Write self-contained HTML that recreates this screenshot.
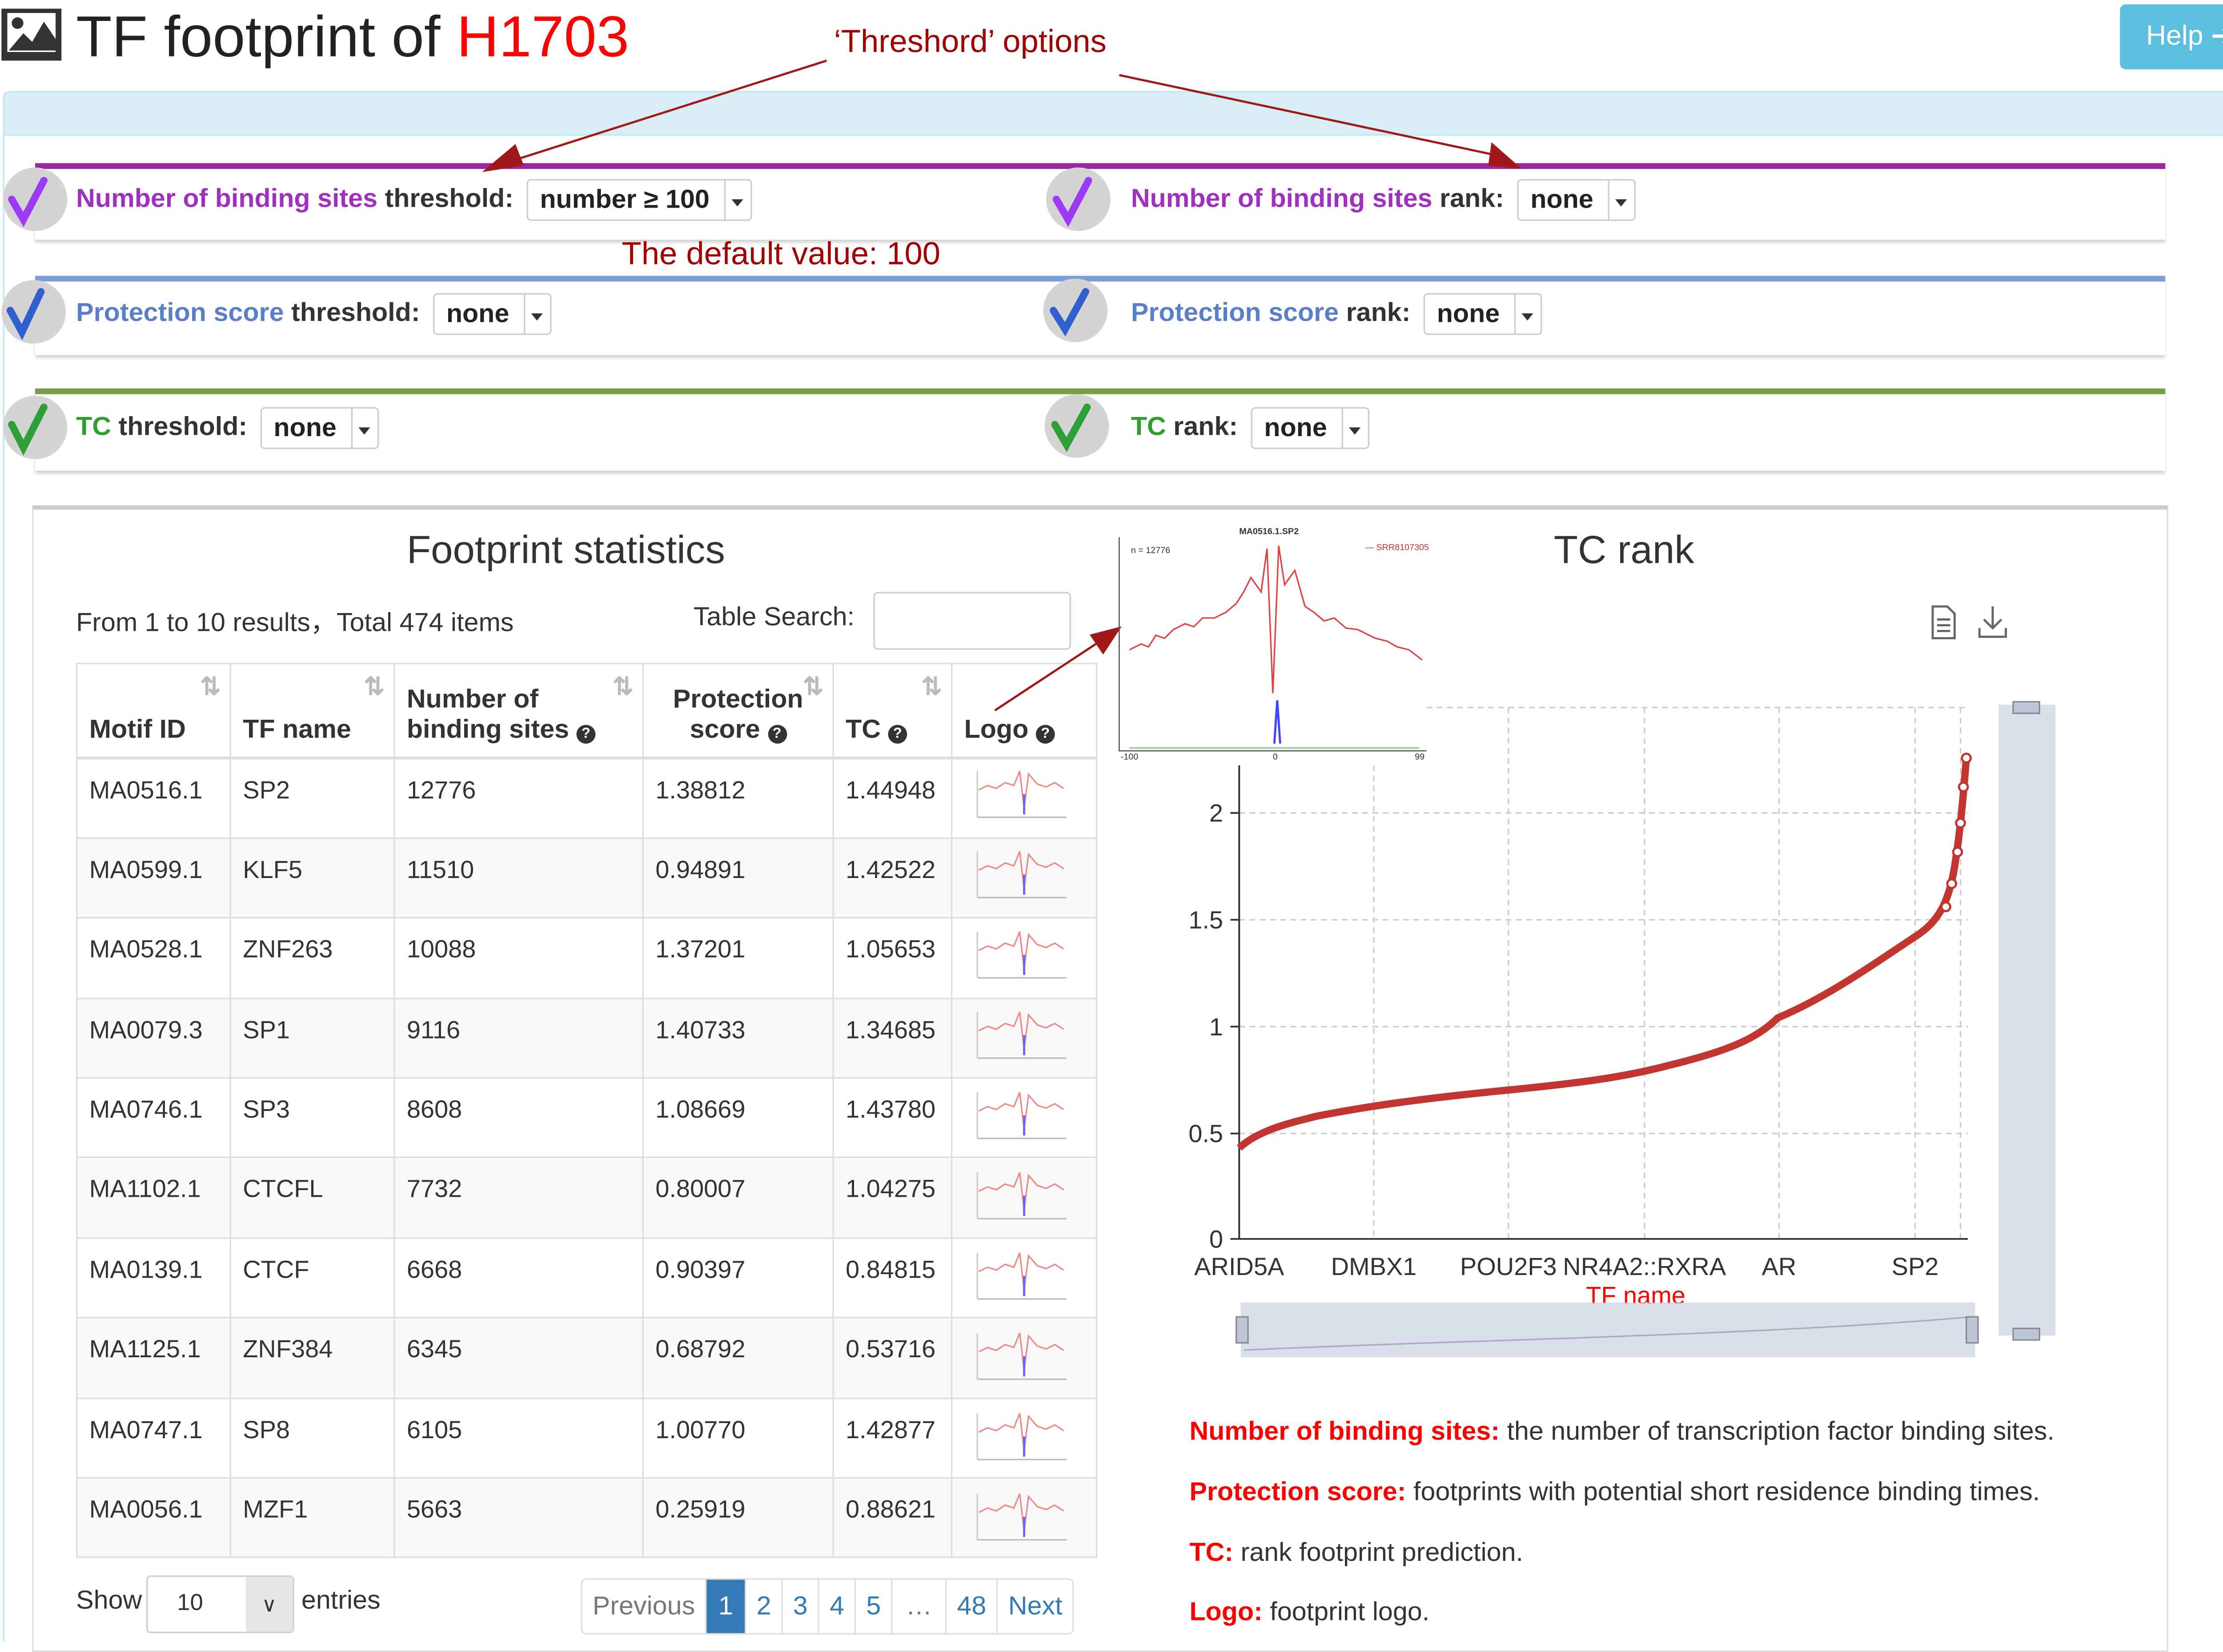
<!DOCTYPE html>
<html><head><meta charset="utf-8">
<style>
html,body{margin:0;padding:0;background:#fff;}
body{width:5094px;height:3693px;overflow:hidden;position:relative;}
#w{position:absolute;left:0;top:0;width:1548px;height:1137px;transform-origin:0 0;transform:scale(3.2907,3.248);font-family:"Liberation Sans",Arial,sans-serif;color:#333;}
.a{position:absolute;white-space:nowrap;}
.box{position:absolute;left:24px;width:1456px;background:#fff;box-shadow:0 2px 2px rgba(0,0,0,.18);}
.circ{position:absolute;width:44px;height:44px;border-radius:50%;background:#d4d4d4;}
.lab{position:absolute;font-size:18px;font-weight:bold;white-space:nowrap;}
.sel{display:inline-block;border:1px solid #ccc;border-radius:3px;padding:3px 28px 3px 8px;position:relative;font-size:18px;font-weight:bold;color:#222;margin-left:4px;vertical-align:middle;background:#fff;}
.sel:after{content:"";position:absolute;right:0;top:0;bottom:0;width:17px;border-left:1px solid #ccc;}
.sel:before{content:"";position:absolute;right:5px;top:13px;border:4px solid transparent;border-top:5px solid #333;border-bottom:none;}
table{border-collapse:collapse;position:absolute;left:52px;top:459px;font-size:17px;}
td,th{border:1px solid #ddd;padding:0 8px;text-align:left;vertical-align:top;}
th{height:56px;vertical-align:bottom;padding-bottom:8px;border-bottom:2px solid #ddd;font-size:18px;position:relative;}
td{height:55.4px;padding-top:12px;box-sizing:border-box;}
tr:nth-child(odd) td{background:#f9f9f9;}
.srt{position:absolute;right:6px;top:6px;color:#bbb;font-size:17px;font-weight:bold;}
.q{display:inline-block;width:13px;height:13px;border-radius:50%;background:#333;color:#fff;font-size:10px;text-align:center;line-height:13px;}
.pg{position:absolute;top:1093px;left:397px;height:37px;border:1px solid #ddd;border-radius:4px;display:flex;font-size:18px;}
.pg span{border-left:1px solid #ddd;padding:0 7px;line-height:37px;color:#337ab7;}
.leg{position:absolute;left:813px;font-size:18px;color:#333;white-space:nowrap;}
.leg b{color:#f00;}
</style></head><body><div id="w">

<svg class="a" style="left:0;top:5px" width="44" height="38" viewBox="0 0 44 38"><rect x="1" y="1" width="41" height="36" fill="#333"/><rect x="5" y="4" width="33" height="27" fill="#fff"/><circle cx="12" cy="11" r="4" fill="#333"/><path d="M6 30 L16 18 L22 24 L30 10 L38 22 L38 30Z" fill="#333"/></svg>
<div class="a" style="left:52px;top:4px;font-size:40px;color:#222;">TF footprint of <span style="color:#f00">H1703</span></div>
<div class="a" style="left:1449px;top:3px;width:96px;height:45px;background:#5bc0de;border-radius:4px;color:#fff;font-size:19px;line-height:45px;text-align:center;">Help ➔</div>
<div class="a" style="left:570px;top:16px;font-size:22px;color:#a00000;">‘Threshord’ options</div>

<div class="a" style="left:2px;top:63px;width:1541px;height:29px;background:#d9edf7;border:1px solid #bce8f1;border-radius:4px 4px 0 0;"></div>
<div class="a" style="left:2px;top:92px;width:1px;height:1045px;background:#bce8f1;"></div>
<div class="a" style="left:1544px;top:92px;width:1px;height:885px;background:#bce8f1;"></div>

<div class="box" style="top:113px;height:49px;border-top:4px solid #9b27a0;"></div>
<div class="box" style="top:191px;height:51px;border-top:4px solid #7b9fd8;"></div>
<div class="box" style="top:269px;height:53px;border-top:4px solid #7a9c4a;"></div>

<div class="circ" style="left:2px;top:116px"></div><div class="circ" style="left:715px;top:116px"></div>
<div class="circ" style="left:1px;top:194px"></div><div class="circ" style="left:713px;top:193px"></div>
<div class="circ" style="left:2px;top:274px"></div><div class="circ" style="left:714px;top:273px"></div>
<svg class="a" style="left:0;top:110px" width="770" height="220">
<g fill="none" stroke-width="5" stroke-linecap="round">
<path d="M8 28 L16 42 L30 15" stroke="#9b3bf5"/><path d="M722 28 L730 42 L744 15" stroke="#9b3bf5"/>
<path d="M7 105 L15 120 L28 92" stroke="#3060d0"/><path d="M720 105 L728 118 L742 92" stroke="#3060d0"/>
<path d="M8 184 L16 200 L30 172" stroke="#2e9e36"/><path d="M721 184 L729 198 L743 172" stroke="#2e9e36"/>
</g></svg>

<div class="lab" style="left:52px;top:124px;"><span style="color:#a030c0">Number of binding sites</span> threshold: <span class="sel">number ≥ 100</span></div>
<div class="lab" style="left:773px;top:124px;"><span style="color:#a030c0">Number of binding sites</span> rank: <span class="sel">none</span></div>
<div class="a" style="left:425px;top:163px;font-size:22px;color:#a00000;">The default value: 100</div>
<div class="lab" style="left:52px;top:203px;"><span style="color:#5b7ec9">Protection score</span> threshold: <span class="sel">none</span></div>
<div class="lab" style="left:773px;top:203px;"><span style="color:#5b7ec9">Protection score</span> rank: <span class="sel">none</span></div>
<div class="lab" style="left:52px;top:282px;"><span style="color:#2e9e2e">TC</span> threshold: <span class="sel">none</span></div>
<div class="lab" style="left:773px;top:282px;"><span style="color:#2e9e2e">TC</span> rank: <span class="sel">none</span></div>

<div class="a" style="left:22px;top:350px;width:1458px;height:790px;border:1px solid #ddd;border-top:3px solid #ccc;"></div>
<div class="a" style="left:278px;top:366px;font-size:27px;">Footprint statistics</div>
<div class="a" style="left:52px;top:417px;font-size:18px;">From 1 to 10 results，Total 474 items</div>
<div class="a" style="left:474px;top:417px;font-size:18px;">Table Search:</div>
<div class="a" style="left:597px;top:410px;width:133px;height:38px;border:1px solid #ccc;border-radius:3px;"></div>

<table>
<tr><th style="width:88px">Motif ID<span class="srt">⇅</span></th><th style="width:95px">TF name<span class="srt">⇅</span></th><th style="width:153px">Number of<br>binding sites <span class="q">?</span><span class="srt">⇅</span></th><th style="width:113px;text-align:center">Protection<br>score <span class="q">?</span><span class="srt">⇅</span></th><th style="width:64px">TC <span class="q">?</span><span class="srt">⇅</span></th><th style="width:82px">Logo <span class="q">?</span></th></tr>
<tr><td>MA0516.1</td><td>SP2</td><td>12776</td><td>1.38812</td><td>1.44948</td><td class="lg"></td></tr>
<tr><td>MA0599.1</td><td>KLF5</td><td>11510</td><td>0.94891</td><td>1.42522</td><td class="lg"></td></tr>
<tr><td>MA0528.1</td><td>ZNF263</td><td>10088</td><td>1.37201</td><td>1.05653</td><td class="lg"></td></tr>
<tr><td>MA0079.3</td><td>SP1</td><td>9116</td><td>1.40733</td><td>1.34685</td><td class="lg"></td></tr>
<tr><td>MA0746.1</td><td>SP3</td><td>8608</td><td>1.08669</td><td>1.43780</td><td class="lg"></td></tr>
<tr><td>MA1102.1</td><td>CTCFL</td><td>7732</td><td>0.80007</td><td>1.04275</td><td class="lg"></td></tr>
<tr><td>MA0139.1</td><td>CTCF</td><td>6668</td><td>0.90397</td><td>0.84815</td><td class="lg"></td></tr>
<tr><td>MA1125.1</td><td>ZNF384</td><td>6345</td><td>0.68792</td><td>0.53716</td><td class="lg"></td></tr>
<tr><td>MA0747.1</td><td>SP8</td><td>6105</td><td>1.00770</td><td>1.42877</td><td class="lg"></td></tr>
<tr><td>MA0056.1</td><td>MZF1</td><td>5663</td><td>0.25919</td><td>0.88621</td><td class="lg"></td></tr>
</table>

<svg class="a" style="left:665px;top:530px" width="70" height="550">
<g id="lg"><path d="M4 17 L10 14 L16 16 L22 12 L28 14 L32 4 L35 30 L38 6 L44 13 L50 15 L56 12 L62 16" fill="none" stroke="#e88" stroke-width="1"/><path d="M35 20 L35 34" stroke="#66f" stroke-width="1.5"/><path d="M3 36 H64" stroke="#bbb"/><path d="M3 4 V36" stroke="#ccc"/></g>
<use href="#lg" y="55.6"/><use href="#lg" y="111.2"/><use href="#lg" y="166.8"/><use href="#lg" y="222.4"/><use href="#lg" y="278"/><use href="#lg" y="333.6"/><use href="#lg" y="389.2"/><use href="#lg" y="444.8"/><use href="#lg" y="500.4"/>
</svg>

<div class="a" style="left:52px;top:1098px;font-size:18px;">Show</div>
<div class="a" style="left:100px;top:1091px;width:99px;height:38px;border:1px solid #ccc;border-radius:3px;font-size:16px;line-height:38px;"><span style="margin-left:20px">10</span><span style="position:absolute;right:0;top:0;width:32px;height:38px;background:#e6e6e6;text-align:center;font-size:14px;">∨</span></div>
<div class="a" style="left:206px;top:1098px;font-size:18px;">entries</div>
<div class="pg"><span style="border:none;color:#777;padding:0 7px">Previous</span><span style="background:#337ab7;color:#fff;padding:0 8px">1</span><span>2</span><span>3</span><span>4</span><span>5</span><span style="color:#777;padding:0 9px">…</span><span>48</span><span>Next</span></div>

<div class="a" style="left:1062px;top:366px;font-size:27px;">TC rank</div>
<svg class="a" style="left:1318px;top:418px" width="60" height="26" fill="none" stroke="#666" stroke-width="1.5"><path d="M3 2 H13 L18 7 V24 H3Z M6 11 H15 M6 15 H15 M6 19 H15"/><path d="M44 2 V17 M38 11 L44 17 L50 11 M35 17 V23 H53 V17"/></svg>

<svg class="a" style="left:0;top:0" width="1548" height="1137">
<g stroke="#a01818" stroke-width="1.5" fill="#a01818">
<line x1="565" y1="42" x2="345" y2="113"/><polygon points="332,118 352,101 357,114"/>
<line x1="765" y1="52" x2="1025" y2="108"/><polygon points="1038,116 1020,100 1018,114"/>
<line x1="680" y1="492" x2="755" y2="442"/><polygon points="765,435 746,440 754,452"/>
</g>
<g fill="none" stroke="#ccc" stroke-dasharray="4,3">
<line x1="847" y1="563" x2="1345" y2="563"/><line x1="847" y1="637" x2="1345" y2="637"/><line x1="847" y1="711" x2="1345" y2="711"/><line x1="847" y1="785" x2="1345" y2="785"/>
<line x1="975" y1="490" x2="1345" y2="490"/>
<line x1="939" y1="530" x2="939" y2="858"/><line x1="1031" y1="490" x2="1031" y2="858"/><line x1="1124" y1="490" x2="1124" y2="858"/><line x1="1216" y1="490" x2="1216" y2="858"/><line x1="1309" y1="490" x2="1309" y2="858"/><line x1="1340" y1="490" x2="1340" y2="858"/>
</g>
<g stroke="#333" stroke-width="1.2"><line x1="847" y1="530" x2="847" y2="858"/><line x1="847" y1="858" x2="1345" y2="858"/>
<line x1="841" y1="563" x2="847" y2="563"/><line x1="841" y1="637" x2="847" y2="637"/><line x1="841" y1="711" x2="847" y2="711"/><line x1="841" y1="785" x2="847" y2="785"/><line x1="841" y1="858" x2="847" y2="858"/></g>
<g font-size="17" fill="#333" font-family="Liberation Sans,Arial,sans-serif" text-anchor="end">
<text x="836" y="569">2</text><text x="836" y="643">1.5</text><text x="836" y="717">1</text><text x="836" y="791">0.5</text><text x="836" y="864">0</text></g>
<g font-size="17" fill="#333" font-family="Liberation Sans,Arial,sans-serif" text-anchor="middle">
<text x="847" y="883">ARID5A</text><text x="939" y="883">DMBX1</text><text x="1031" y="883">POU2F3</text><text x="1124" y="883">NR4A2::RXRA</text><text x="1216" y="883">AR</text><text x="1309" y="883">SP2</text>
<text x="1118" y="903" fill="#f00">TF name</text></g>
<path d="M847 795 C860 783 880 778 900 773 C940 765 980 760 1030 755 C1080 750 1110 746 1140 738 C1180 728 1200 720 1215 705 C1250 690 1280 668 1310 648 C1325 638 1332 625 1336 600 C1340 575 1342 550 1344 525" fill="none" stroke="#c23531" stroke-width="5"/>
<g fill="#fff" stroke="#c23531" stroke-width="1.5"><circle cx="1344" cy="525" r="3"/><circle cx="1342" cy="545" r="3"/><circle cx="1340" cy="570" r="3"/><circle cx="1338" cy="590" r="3"/><circle cx="1334" cy="612" r="3"/><circle cx="1330" cy="628" r="3"/></g>
<rect x="1366" y="488" width="39" height="437" fill="#d0d8e4" opacity=".8"/>
<rect x="1376" y="486" width="18" height="8" fill="#bcc6d4" stroke="#889"/><rect x="1376" y="920" width="18" height="8" fill="#bcc6d4" stroke="#889"/>
<path d="M848 902 H1350 V940 H848Z" fill="#d0d8e4" opacity=".8"/>
<path d="M850 935 C1000 928 1200 925 1348 912" fill="none" stroke="#aab" />
<rect x="845" y="912" width="8" height="18" fill="#bcc6d4" stroke="#889"/><rect x="1344" y="912" width="8" height="18" fill="#bcc6d4" stroke="#889"/>
<g font-family="Liberation Sans,Arial,sans-serif" font-size="6" fill="#333">
<text x="847" y="370" font-weight="bold">MA0516.1.SP2</text><text x="773" y="383">n = 12776</text><text x="933" y="381" fill="#c33">— SRR8107305</text>
<text x="766" y="526">-100</text><text x="870" y="526">0</text><text x="967" y="526">99</text></g>
<path d="M765 372 V520 H975" fill="none" stroke="#555" stroke-width=".8"/>
<path d="M772 450 L780 446 L785 448 L790 440 L796 442 L802 436 L810 432 L816 434 L822 428 L830 428 L838 424 L845 418 L850 410 L855 400 L862 410 L866 380 L870 480 L874 378 L878 405 L885 395 L892 420 L898 424 L905 430 L912 428 L920 435 L928 436 L940 442 L948 444 L955 448 L963 450 L972 457" fill="none" stroke="#e04040" stroke-width="1"/>
<path d="M871 515 L873 485 L875 515" fill="none" stroke="#44f" stroke-width="1.5"/>
<path d="M772 518 H970" stroke="#8c8" stroke-width="1"/>
</svg>

<div class="leg" style="top:981px"><b>Number of binding sites:</b> the number of transcription factor binding sites.</div>
<div class="leg" style="top:1023px"><b>Protection score:</b> footprints with potential short residence binding times.</div>
<div class="leg" style="top:1065px"><b>TC:</b> rank footprint prediction.</div>
<div class="leg" style="top:1106px"><b>Logo:</b> footprint logo.</div>

</div></body></html>
